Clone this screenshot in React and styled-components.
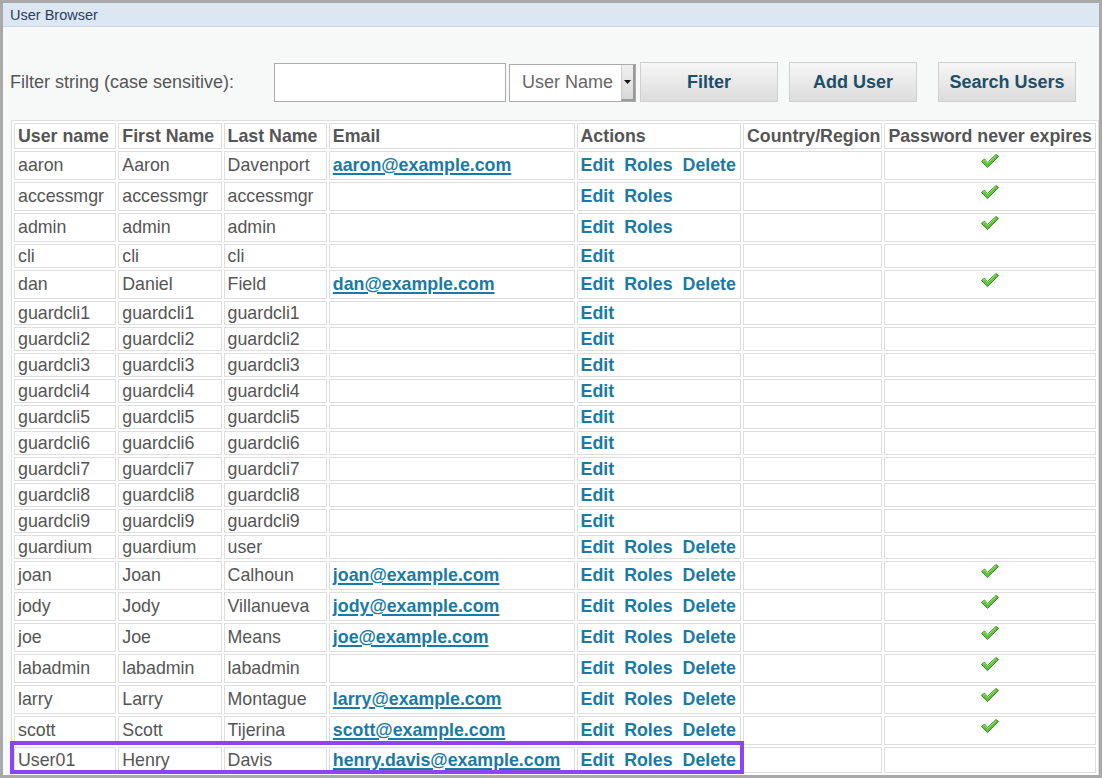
import React from "react";
import styled, { createGlobalStyle } from "styled-components";

const GlobalStyle = createGlobalStyle`
  html, body {
    margin: 0;
    padding: 0;
    background: #a9a9a9;
  }
  body {
    font-family: "Liberation Sans", Arial, sans-serif;
  }
`;

const users = [
  { u: "aaron", f: "Aaron", l: "Davenport", e: "aaron@example.com", a: 3, c: true },
  { u: "accessmgr", f: "accessmgr", l: "accessmgr", a: 2, c: true },
  { u: "admin", f: "admin", l: "admin", a: 2, c: true },
  { u: "cli", f: "cli", l: "cli", a: 1 },
  { u: "dan", f: "Daniel", l: "Field", e: "dan@example.com", a: 3, c: true },
  ...[1, 2, 3, 4, 5, 6, 7, 8, 9].map((n) => ({
    u: `guardcli${n}`,
    f: `guardcli${n}`,
    l: `guardcli${n}`,
    a: 1,
  })),
  { u: "guardium", f: "guardium", l: "user", a: 3 },
  { u: "joan", f: "Joan", l: "Calhoun", e: "joan@example.com", a: 3, c: true },
  { u: "jody", f: "Jody", l: "Villanueva", e: "jody@example.com", a: 3, c: true },
  { u: "joe", f: "Joe", l: "Means", e: "joe@example.com", a: 3, c: true },
  { u: "labadmin", f: "labadmin", l: "labadmin", a: 3, c: true },
  { u: "larry", f: "Larry", l: "Montague", e: "larry@example.com", a: 3, c: true },
  { u: "scott", f: "Scott", l: "Tijerina", e: "scott@example.com", a: 3, c: true },
  { u: "User01", f: "Henry", l: "Davis", e: "henry.davis@example.com", a: 3, hl: true },
];

const actionNames = ["Edit", "Roles", "Delete"];

const Check = () => (
  <svg width="20" height="16" viewBox="0 0 20 16">
    <path
      d="M1.5 8.5 L4.5 6 L7.5 9.5 L16 1.5 L18.5 3.5 L7.5 14.5 Z"
      fill="#5cc23a"
      stroke="#3f8f2a"
      strokeWidth="1"
      strokeLinejoin="round"
    />
    <path d="M3 8.3 L4.6 7 L7.5 10.3 L16 2.6" fill="none" stroke="#a8e68a" strokeWidth="0.9" />
  </svg>
);

const UserBrowser = () => {
  return (
    <Panel>
      <TitleBar>User Browser</TitleBar>
      <Body>
        <FilterBar>
          <FilterLabel>Filter string (case sensitive):</FilterLabel>
          <FilterInput />
          <FakeSelect>
            <span>User Name</span>
            <SelectArrow>
              <svg width="7" height="4" viewBox="0 0 7 4">
                <path d="M0 0 L7 0 L3.5 4 Z" fill="#111" />
              </svg>
            </SelectArrow>
          </FakeSelect>
          <Button Left="4px">Filter</Button>
          <Button Left="11px" Width="128px">Add User</Button>
          <Button Left="21px">Search Users</Button>
        </FilterBar>

        <Table>
          <colgroup>
            <col style={{ width: 102 }} />
            <col style={{ width: 103 }} />
            <col style={{ width: 103 }} />
            <col style={{ width: 245 }} />
            <col style={{ width: 164 }} />
            <col style={{ width: 139 }} />
            <col style={{ width: 211 }} />
          </colgroup>
          <thead>
            <tr>
              <Th>User name</Th>
              <Th>First Name</Th>
              <Th>Last Name</Th>
              <Th>Email</Th>
              <Th>Actions</Th>
              <Th>Country/Region</Th>
              <Th>Password never expires</Th>
            </tr>
          </thead>
          <tbody>
            {users.map((user) => (
              <tr key={user.u}>
                <Td Height={user.c ? "29px" : user.hl ? "26px" : "24px"} Rel={user.hl}>
                  {user.u}
                  {user.hl && <Highlight />}
                </Td>
                <Td>{user.f}</Td>
                <Td>{user.l}</Td>
                <Td>{user.e && <EmailLink href="#">{user.e}</EmailLink>}</Td>
                <Td>
                  {actionNames.slice(0, user.a).map((name) => (
                    <ActionLink key={name} href="#">
                      {name}
                    </ActionLink>
                  ))}
                </Td>
                <Td />
                <Td Align="center">
                  {user.c && (
                    <CheckWrap>
                      <Check />
                    </CheckWrap>
                  )}
                </Td>
              </tr>
            ))}
          </tbody>
        </Table>
      </Body>
    </Panel>
  );
};

const Panel = styled.div`
  margin: 3px 3px 0 3px;
  height: 772px;
  background: #f7f9f9;
  display: flex;
  flex-direction: column;
  overflow: hidden;
`;

const TitleBar = styled.div`
  height: 23px;
  line-height: 24px;
  padding-left: 7px;
  font-size: 14.5px;
  color: #2b3e5c;
  background: #dde7f4;
  border-bottom: 1px solid #c9d5e5;
`;

const Body = styled.div`
  padding: 35px 0 0 8px;
  display: flex;
  flex-direction: column;
`;

const FilterBar = styled.div`
  display: flex;
  align-items: center;
  height: 40px;
  margin-left: -1px;
`;

const FilterLabel = styled.label`
  width: 264px;
  font-size: 18px;
  color: #555;
`;

const FilterInput = styled.input`
  box-sizing: border-box;
  width: 232px;
  height: 39px;
  border: 1px solid #aaa;
  background: #fff;
  margin: 0;
`;

const FakeSelect = styled.div`
  box-sizing: border-box;
  width: 127px;
  height: 38px;
  margin-left: 3px;
  margin-top: 1px;
  border: 1px solid #aaa;
  background: #fff;
  display: flex;
  align-items: stretch;
  span {
    flex: 1;
    display: flex;
    align-items: center;
    padding-left: 12px;
    font-size: 18px;
    color: #666;
  }
`;

const SelectArrow = styled.div`
  width: 11px;
  display: flex;
  align-items: center;
  justify-content: center;
  background: linear-gradient(#f0f0f0, #d8d8d8);
  border-left: 1px solid #ccc;
  border-right: 2px solid #999;
  border-bottom: 2px solid #999;
`;

const Button = styled.button`
  box-sizing: border-box;
  width: ${(props) => props.Width || "138px"};
  height: 40px;
  margin: 0 0 0 ${(props) => props.Left};
  border: 1px solid #cfcfcf;
  background: linear-gradient(#f6f6f6, #dcdcdc);
  font-family: "Liberation Sans", Arial, sans-serif;
  font-weight: 700;
  font-size: 18px;
  color: #1d4f6b;
  cursor: pointer;
`;

const Table = styled.table`
  margin-top: 18px;
  width: 1088px;
  table-layout: fixed;
  border-collapse: separate;
  border-spacing: 2px;
  border: 1px solid #dedede;
  background: #fff;
  font-size: 17.8px;
  color: #555;
`;

const Th = styled.th`
  height: 24px;
  padding: 0 3px;
  border: 1px solid #dedede;
  text-align: left;
  font-weight: 700;
  color: #555;
  white-space: nowrap;
  overflow: hidden;
`;

const Td = styled.td`
  position: ${(props) => (props.Rel ? "relative" : "static")};
  height: ${(props) => props.Height};
  padding: 0 3px;
  border: 1px solid #dedede;
  text-align: ${(props) => props.Align || "left"};
  white-space: nowrap;
  box-sizing: border-box;
`;

const EmailLink = styled.a`
  color: #1a7aa6;
  font-weight: 700;
  text-decoration: underline;
  text-decoration-thickness: 2px;
  text-underline-offset: 2px;
`;

const ActionLink = styled.a`
  color: #1a7aa6;
  font-weight: 700;
  text-decoration: none;
  margin-right: 10px;
  &:last-child {
    margin-right: 0;
  }
`;

const CheckWrap = styled.span`
  display: inline-flex;
  position: relative;
  top: -2px;
`;

const Highlight = styled.div`
  position: absolute;
  left: -5px;
  top: -7px;
  width: 734px;
  height: 33px;
  box-sizing: border-box;
  border: 4px solid #8b45f6;
  pointer-events: none;
`;

const App = () => (
  <>
    <GlobalStyle />
    <UserBrowser />
  </>
);

export default App;
